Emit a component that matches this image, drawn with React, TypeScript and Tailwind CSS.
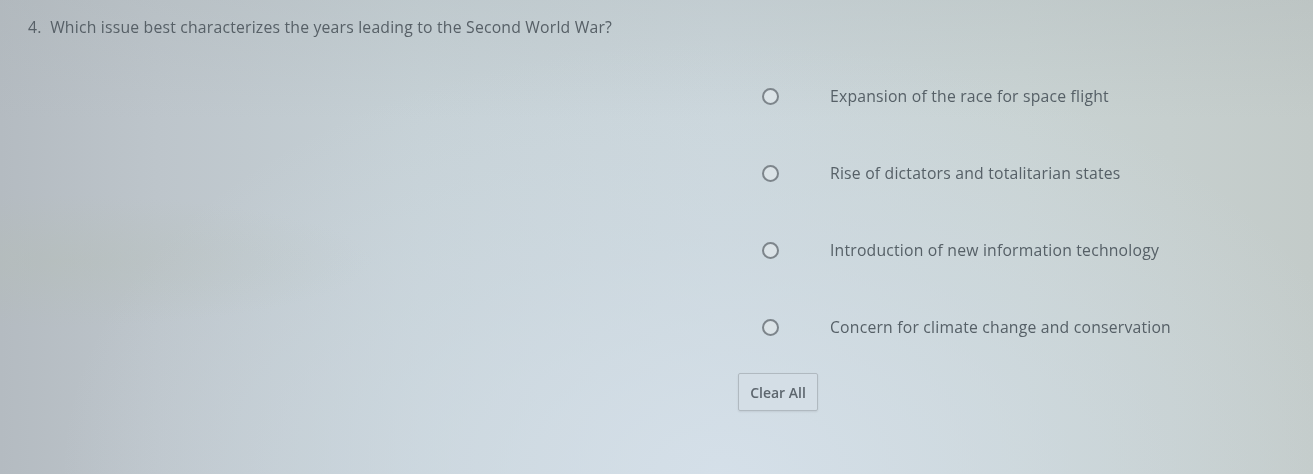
import React from 'react';

const options = [
  'Expansion of the race for space flight',
  'Rise of dictators and totalitarian states',
  'Introduction of new information technology',
  'Concern for climate change and conservation',
];

const App: React.FC = () => {
  return (
    <div
      className="relative w-[1313px] h-[474px] overflow-hidden bg-[linear-gradient(90deg,#b4bbc1_0%,#bdc5cb_12%,#c6d1d6_32%,#cbd6db_55%,#c9d3d3_78%,#c3cbc9_100%)]"
      style={{ fontFamily: '"Open Sans", "Liberation Sans", Arial, sans-serif' }}
    >
      <div className="absolute inset-0 bg-[radial-gradient(ellipse_at_55%_100%,rgba(214,225,235,0.85)_0%,rgba(210,222,232,0.4)_35%,rgba(200,210,215,0)_65%)]" />
      <div className="absolute inset-0 bg-[linear-gradient(180deg,rgba(170,178,180,0.25)_0%,rgba(170,178,180,0)_25%)]" />
      <div className="absolute inset-0 bg-[radial-gradient(ellipse_at_4%_55%,rgba(180,190,180,0.35)_0%,rgba(180,190,185,0)_18%)]" />

      <div className="relative flex flex-col blur-[0.6px]">
        <p className="pl-[28px] pt-[17px] text-[15.75px] leading-[20px] text-[#576067] tracking-[0.2px]">
          4.&nbsp; Which issue best characterizes the years leading to the Second World War?
        </p>

        <div className="flex flex-col pl-[762px] pt-[21px]">
          {options.map((o) => (
            <label key={o} className="flex items-center h-[77px] gap-[51px]">
              <span className="w-[17px] h-[17px] shrink-0 rounded-full border-2 border-[#7d858b] bg-[#dbe3e7]" />
              <span className="text-[15.75px] text-[#566067] whitespace-nowrap tracking-[0.2px]">{o}</span>
            </label>
          ))}
        </div>

        <div className="pl-[738px] pt-[7px]">
          <button className="w-[80px] h-[38px] rounded-[2px] border border-[#b0b9c0] bg-[#d4dee6] text-[14px] font-semibold text-[#5d666e] shadow-[0_1px_2px_rgba(0,0,0,0.08)]">
            Clear All
          </button>
        </div>
      </div>
    </div>
  );
};

export default App;
